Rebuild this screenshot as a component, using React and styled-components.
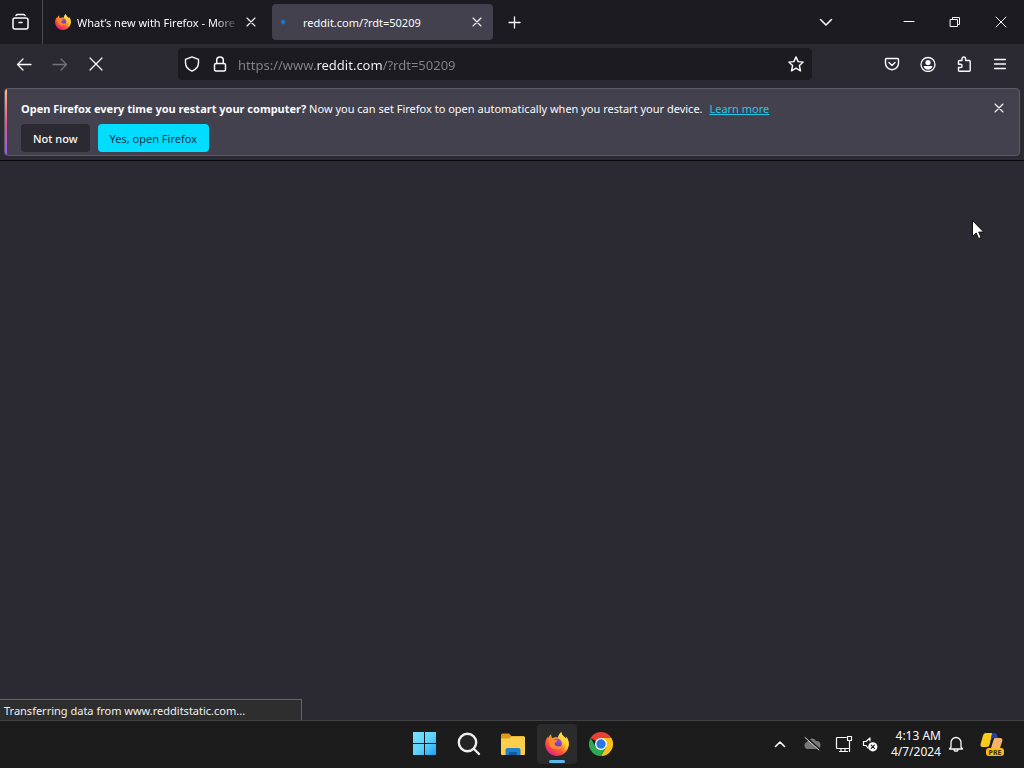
import React from 'react';
import styled, { createGlobalStyle } from 'styled-components';

const GlobalStyle = createGlobalStyle`
  * { box-sizing: border-box; }
  body {
    margin: 0;
    background: #2b2a33;
    color: #fbfbfe;
    font-family: "Noto Sans", "Open Sans", sans-serif;
    font-size: 11px;
    line-height: 16px;
  }
  button, input { font: inherit; color: inherit; }
`;

const Screen = styled.div`
  position: relative;
  display: flex;
  flex-direction: column;
  min-height: 100vh;
`;

const TabStrip = styled.header`
  display: flex;
  align-items: center;
  height: 44px;
  background: #1c1b22;
`;

const IconButton = styled.button`
  display: flex;
  align-items: center;
  justify-content: center;
  flex: none;
  width: ${(p) => p.$width || 36}px;
  height: ${(p) => p.$height || 32}px;
  padding: 0;
  border: 0;
  background: none;
  color: ${(p) => (p.$dim ? '#74737c' : '#fbfbfe')};
`;

const Overview = styled.div`
  display: flex;
  align-items: center;
  height: 100%;
  padding: 0 2px;
  margin-right: 3px;
  border-right: 1px solid #4b4a52;
`;

const Tabs = styled.div`
  display: flex;
  gap: 5px;
`;

const Tab = styled.div`
  display: flex;
  align-items: center;
  width: 221px;
  height: 36px;
  padding: 0 4px 0 9px;
  border-radius: 4px;
  background: ${(p) => (p.$active ? '#42414d' : 'transparent')};
`;

const TabTitle = styled.span`
  flex: 1;
  min-width: 0;
  padding: 1px 0 0 6px;
  line-height: 18px;
  white-space: nowrap;
  mask-image: ${(p) => (p.$fade ? 'linear-gradient(to left, transparent, #000 24px)' : 'none')};
`;

const Loading = styled.span`
  width: 16px;
  height: 16px;
  background: radial-gradient(circle at 2px 8px, #1680dd 0 1px, transparent 3px);
`;

const WindowControls = styled.div`
  display: flex;
  margin-left: auto;
`;

const ListTabs = styled.div`
  margin-right: 42px;
`;

const Toolbar = styled.nav`
  display: flex;
  align-items: center;
  height: 40px;
  padding: 0 6px;
`;

const Group = styled.div`
  display: flex;
  flex: none;
`;

const UrlBar = styled.div`
  display: flex;
  align-items: center;
  flex: 1;
  min-width: 0;
  height: 32px;
  margin: 0 62px 0 64px;
  border-radius: 4px;
  background: #1c1b22;
`;

const UrlInput = styled.input`
  flex: 1;
  min-width: 0;
  height: 32px;
  padding: 2px 0 0 4px;
  border: 0;
  outline: 0;
  font-size: 13px;
  color: #8f8e96;
  background: linear-gradient(90deg, #85848c 82px, #fbfbfe 82px 148px, #85848c 148px);
  background-clip: text;
  -webkit-background-clip: text;
  -webkit-text-fill-color: transparent;
`;

const NoticeArea = styled.div`
  padding: 4px;
  border-bottom: 1px solid #08080a;
`;

const Notice = styled.section`
  position: relative;
  display: flex;
  align-items: flex-start;
  height: 68px;
  padding: 11px 4px 3px 16px;
  border: 1px solid #5b5a66;
  border-radius: 4px;
  background: #42414d;
  overflow: hidden;

  &::before {
    content: "";
    position: absolute;
    inset: 0 auto 0 0;
    width: 2px;
    background: linear-gradient(#ffbd7f, #e45b8f 50%, #9059ff);
  }
`;

const NoticeBody = styled.div`
  flex: 1;
`;

const Message = styled.p`
  margin: 0 0 6px;
  line-height: 18px;
`;

const Link = styled.a`
  margin-left: 4px;
  color: #1fc9e8;
`;

const Actions = styled.div`
  display: flex;
  gap: 8px;
`;

const ActionButton = styled.button`
  height: 28px;
  padding: 1px 12px 0;
  border: 0;
  border-radius: 4px;
  white-space: nowrap;
  font-weight: ${(p) => (p.$primary ? 400 : 500)};
  background: ${(p) => (p.$primary ? '#00ddff' : '#2b2a33')};
  color: ${(p) => (p.$primary ? '#15324b' : '#fbfbfe')};
`;

const Page = styled.main`
  display: flex;
  flex: 1;
  align-items: flex-end;
`;

const Status = styled.div`
  width: 302px;
  height: 21px;
  padding: 3px 4px 0;
  border: 1px solid #66656c;
  border-width: 1px 1px 0 0;
  background: #2e2e2f;
  color: #f0f0f2;
`;

const Taskbar = styled.footer`
  display: grid;
  grid-template-columns: 1fr auto 1fr;
  height: 48px;
  padding: 3px 0 4px 2px;
  border-top: 1px solid #414045;
  background: #1c1c1c;
`;

const Apps = styled.div`
  display: flex;
  gap: 4px;
  grid-column: 2;
`;

const AppButton = styled.button`
  position: relative;
  display: flex;
  align-items: center;
  justify-content: center;
  width: 40px;
  height: 40px;
  padding: 0;
  border: 0;
  border-radius: 4px;
  background: ${(p) => (p.$active ? '#2b2b2c' : 'none')};

  &::after {
    content: "";
    display: ${(p) => (p.$active ? 'block' : 'none')};
    position: absolute;
    bottom: 1px;
    left: 12px;
    width: 16px;
    height: 3px;
    border-radius: 2px;
    background: #5cb8ec;
  }
`;

const Tray = styled.div`
  display: flex;
  align-items: center;
  justify-content: flex-end;
  padding-right: 11px;
`;

const Clock = styled.time`
  width: 61px;
  text-align: right;
  font-size: 12px;
`;

const Cursor = styled.svg`
  position: absolute;
  left: 972px;
  top: 220px;
`;

const Icon = ({ size = 16, sw = 1.3, children, ...rest }) => (
  <svg width={size} height={size} viewBox={`0 0 ${size} ${size}`} fill="none" stroke="currentColor"
    strokeWidth={sw} strokeLinecap="round" strokeLinejoin="round" aria-hidden="true" {...rest}>
    {children}
  </svg>
);

const Cross = ({ size = 16, inset = 4, sw = 1.1 }) => (
  <Icon size={size} sw={sw}>
    <path d={`M${inset} ${inset}L${size - inset} ${size - inset}M${size - inset} ${inset}L${inset} ${size - inset}`} />
  </Icon>
);

const FirefoxLogo = ({ size, id }) => (
  <svg width={size} height={size} viewBox="0 0 24 24" aria-hidden="true">
    <defs>
      <linearGradient id={`${id}a`} x1="20" y1="2" x2="5" y2="22" gradientUnits="userSpaceOnUse">
        <stop offset="0" stopColor="#fff04a" />
        <stop offset=".35" stopColor="#ffb12b" />
        <stop offset=".65" stopColor="#ff5a36" />
        <stop offset="1" stopColor="#e9207a" />
      </linearGradient>
      <linearGradient id={`${id}b`} x1="12" y1="6" x2="12" y2="16" gradientUnits="userSpaceOnUse">
        <stop offset="0" stopColor="#a84bd8" />
        <stop offset="1" stopColor="#5b3fc0" />
      </linearGradient>
    </defs>
    <path fill={`url(#${id}a)`} d="M16.400 0c-2 1.500-3 3.600-3.200 5.600-2.300-.7-4.300-.4-5.900.6C6.300 5 6 3.600 6.200 2.200 4.800 3.100 3.700 4.500 3.200 6 2.800 5.700 2.600 5.200 2.600 4.700.8 7.100.1 10 .2 12.700.7 19 5.600 23.900 12 23.900c6.700 0 11.800-5.200 11.800-11.800 0-3.100-1.100-5.900-3-7.700.3.800.4 1.500.4 2.300C19.300 4.700 16.600 3.400 16.400 0z" />
    <circle cx="11.800" cy="11.500" r="4.900" fill={`url(#${id}b)`} />
    <path fill="#ff8a2a" d="M3.200 8.200c1.600-1.500 3.500-1.800 5.200-1.200 1 .5 1.700 1.200 3.300 1.200.7 0 .9.400.6.900-.5.900-1.800 1-2.500 1.800-.6.700-.2 2.200 1 2.900 2.200 1.200 4 .1 5.900.600-1.200 2.400-3.900 3.500-6.700 2.800C5.700 16.500 4 12.300 3.200 8.200z" />
    <path fill="#ffd83d" d="M13.200 5.600c3.800 1.300 5.800 4.400 5.200 7.900 1.400-1 2-2.400 2-4 1.100 3.800.1 7.600-2.600 9.800 4-1.500 6-4.500 6-7.200 0-3.100-1.100-5.900-3-7.700.3.800.4 1.500.4 2.300C19.300 4.700 16.600 3.400 16.400 0c-2 1.500-3 3.600-3.200 5.600z" opacity=".75" />
  </svg>
);

const ChromeLogo = () => (
  <svg width="24" height="24" viewBox="0 0 24 24" aria-hidden="true">
    <path fill="#e94235" d="M12 12L1.600 6A12 12 0 0 1 22.400 6z" />
    <path fill="#fbc116" d="M12 6h10.400A12 12 0 0 1 12 24l5.200-9z" />
    <path fill="#2da94f" d="M1.600 6A12 12 0 0 0 12 24l5.200-9L12 12 6.800 15z" />
    <circle cx="12" cy="12" r="6" fill="#fff" />
    <circle cx="12" cy="12" r="4.700" fill="#2676e8" />
  </svg>
);

const WindowsLogo = () => (
  <svg width="24" height="24" viewBox="0 0 24 24" aria-hidden="true">
    <defs>
      <linearGradient id="win" x1="0" y1="0" x2="24" y2="24" gradientUnits="userSpaceOnUse">
        <stop offset="0" stopColor="#75e4fb" />
        <stop offset=".5" stopColor="#5fd2fb" />
        <stop offset="1" stopColor="#159bf2" />
      </linearGradient>
    </defs>
    <path fill="url(#win)" d="M0 0h11v11H0zM12 0h11v11H12zM0 12h11v11H0zM12 12h11v11H12z" />
  </svg>
);

const FolderLogo = () => (
  <svg width="26" height="24" viewBox="0 0 26 24" aria-hidden="true">
    <path fill="#dc9b1c" d="M1 3q0-1.500 1.500-1.500H9L11.500 4H24v6H1z" />
    <path fill="#fbcf4b" d="M1 6.500h8.500l2-2H24q1 0 1 1V22q0 1-1 1H2q-1 0-1-1z" />
    <path fill="#2380cc" d="M5.500 23v-5q0-2 2-2h11q2 0 2 2v5z" />
    <path fill="#135ba1" d="M9 20h8v3H9z" />
  </svg>
);

const CopilotLogo = () => (
  <svg width="26" height="26" viewBox="0 0 26 26" aria-hidden="true">
    <path fill="#f8cb19" d="M6.500 2h7L10.500 14q-.7 2-2.700 2H3.500Q1 16 1.600 13L4 4.500Q4.700 2 6.500 2z" />
    <path fill="#2140b5" d="M13 2h2.500q2 0 2.600 2l.9 3h-4.500q-1.500 0-2 1.600l-1 2z" />
    <path fill="#f5b36b" d="M16 7h5q3 0 2.300 3L21 17h-9l2.500-8q.5-2 1.500-2z" />
    <rect x="7" y="17" width="18" height="8" rx="3" fill="#fbbc16" />
    <text x="16" y="23.500" textAnchor="middle" fontSize="7" fontWeight="700" fill="#3a2c05" fontFamily="Noto Sans, sans-serif">PRE</text>
  </svg>
);

export default function App() {
  return (
    <Screen>
      <GlobalStyle />
      <TabStrip>
        <Overview>
          <IconButton aria-label="Firefox View" $width={38}>
            <Icon size={18} sw={1.5}>
              <path d="M4 2.500q.5-1 1.500-1h6q1 0 1.500 1" /><rect x="1" y="5" width="15" height="11" rx="2" /><path d="M7 9.500h3" />
            </Icon>
          </IconButton>
        </Overview>
        <Tabs>
          <Tab>
            <FirefoxLogo size={16} id="tabfx" />
            <TabTitle $fade>What’s new with Firefox - More</TabTitle>
            <IconButton aria-label="Close tab" $width={24} $height={24}><Cross /></IconButton>
          </Tab>
          <Tab $active>
            <Loading />
            <TabTitle>reddit.com/?rdt=50209</TabTitle>
            <IconButton aria-label="Close tab" $width={24} $height={24}><Cross /></IconButton>
          </Tab>
        </Tabs>
        <IconButton aria-label="New tab" $width={42}><Icon><path d="M8.500 3v11M3 8.500h11" /></Icon></IconButton>
        <WindowControls>
          <ListTabs>
            <IconButton aria-label="List all tabs"><Icon sw={1.6}><path d="M2.500 5.500L8 11l5.500-5.500" /></Icon></IconButton>
          </ListTabs>
          <IconButton aria-label="Minimize" $width={46}><Icon sw={1}><path d="M3 7.500h10" /></Icon></IconButton>
          <IconButton aria-label="Restore" $width={46}>
            <Icon sw={1} strokeLinejoin="miter"><path d="M3.500 5.500h7v7h-7zM5.500 5.500v-2h7v7h-2" /></Icon>
          </IconButton>
          <IconButton aria-label="Close" $width={46}><Cross inset={3} sw={1} /></IconButton>
        </WindowControls>
      </TabStrip>

      <Toolbar>
        <Group>
          <IconButton aria-label="Back"><Icon><path d="M15 8.500H1.500M7 3L1.500 8.500 7 14" /></Icon></IconButton>
          <IconButton aria-label="Forward" $dim><Icon><path d="M1 8.500h13.500M9 3l5.500 5.500L9 14" /></Icon></IconButton>
          <IconButton aria-label="Stop"><Cross inset={2} sw={1.3} /></IconButton>
        </Group>
        <UrlBar>
          <IconButton aria-label="Tracking protection" $width={28}>
            <Icon sw={1.4}><path d="M8 .9l6.500 2.500v3.400c0 4-2.500 6.800-6.500 8.400-4-1.600-6.500-4.400-6.500-8.400V3.400z" /></Icon>
          </IconButton>
          <IconButton aria-label="Site information" $width={28}>
            <Icon sw={1.5}><rect x="2.500" y="7.500" width="11" height="7.500" rx="1.500" /><path d="M4.700 7.500V4.300a3.300 3.300 0 0 1 6.600 0v3.200" /></Icon>
          </IconButton>
          <UrlInput aria-label="Address" defaultValue="https://www.reddit.com/?rdt=50209" />
          <IconButton aria-label="Bookmark" $width={32}>
            <Icon sw={1.4}><path d="M8 .9l2.100 4.700 5.100.5-3.800 3.400 1.100 5.300L8 12.200l-4.500 2.600 1.100-5.300L.8 6.100l5.100-.5z" /></Icon>
          </IconButton>
        </UrlBar>
        <Group>
          <IconButton aria-label="Pocket">
            <Icon sw={1.4}><path d="M2.500 2.500h11q1 0 1 1v3.700a6.500 6.500 0 0 1-13 0V3.500q0-1 1-1zM5 6.500l3 3 3-3" /></Icon>
          </IconButton>
          <IconButton aria-label="Account">
            <Icon sw={1.3}><circle cx="8" cy="8.500" r="7" /><circle cx="8" cy="6.500" r="2.600" fill="currentColor" stroke="none" /><path d="M3.600 10h8.800c0 2.200-2.200 3.700-4.400 3.700S3.600 12.200 3.600 10z" fill="currentColor" stroke="none" /></Icon>
          </IconButton>
          <IconButton aria-label="Extensions">
            <Icon sw={1.4}><path d="M6 4.500V2.800a1.800 1.800 0 0 1 3.600 0v1.700h3.600q1 0 1 1v8.700q0 1-1 1H3.500q-1 0-1-1V11.500h2a1.600 1.600 0 0 0 0-3.200h-2V5.500q0-1 1-1z" /></Icon>
          </IconButton>
          <IconButton aria-label="Menu"><Icon><path d="M2.500 3.500h11M2.500 8h11M2.500 12.500h11" /></Icon></IconButton>
        </Group>
      </Toolbar>

      <NoticeArea>
        <Notice>
          <NoticeBody>
            <Message>
              <b>Open Firefox every time you restart your computer?</b> Now you can set Firefox to open automatically when you restart your device. <Link href="#learn">Learn more</Link>
            </Message>
            <Actions>
              <ActionButton>Not now</ActionButton>
              <ActionButton $primary>Yes, open Firefox</ActionButton>
            </Actions>
          </NoticeBody>
          <IconButton aria-label="Dismiss" $width={32} $height={16}><Cross /></IconButton>
        </Notice>
      </NoticeArea>

      <Page>
        <Status role="status">Transferring data from www.redditstatic.com...</Status>
      </Page>

      <Taskbar>
        <Apps>
          <AppButton aria-label="Start"><WindowsLogo /></AppButton>
          <AppButton aria-label="Search">
            <Icon size={24} sw={2.4} color="#eeeeee"><circle cx="10.500" cy="10.500" r="8.700" fill="#242424" /><path d="M17 17l5 5" /></Icon>
          </AppButton>
          <AppButton aria-label="File Explorer"><FolderLogo /></AppButton>
          <AppButton aria-label="Firefox" $active><FirefoxLogo size={24} id="barfx" /></AppButton>
          <AppButton aria-label="Chrome"><ChromeLogo /></AppButton>
        </Apps>
        <Tray>
          <IconButton aria-label="Show hidden icons" $width={32}><Icon sw={1.6}><path d="M3.500 10.500L8 6l4.500 4.500" /></Icon></IconButton>
          <IconButton aria-label="OneDrive" $width={32}>
            <Icon size={18}><path d="M4.500 14a3.600 3.600 0 0 1-.5-7 5 5 0 0 1 9-1 4 4 0 0 1 1 8z" fill="#77777a" stroke="none" /><path d="M3 2l13 12" stroke="#1c1c1c" strokeWidth="2" /><path d="M2 2.500l14 12.500" stroke="#dddddd" strokeWidth="1" /></Icon>
          </IconButton>
          <IconButton aria-label="Network" $width={32}>
            <Icon size={18} sw={1.2}><path d="M11 2.500H2.500q-1 0-1 1v9q0 1 1 1h12M6 13.500v3M10 13.500v3M4.500 16.500h8M12.500 1.500h4v4h-4zM14.500 5.500v11" /></Icon>
          </IconButton>
          <IconButton aria-label="Volume muted" $width={20}>
            <Icon sw={1.2}><path d="M6 12L4 9.500H1.500v-4H4L8 2v3" /><circle cx="10.800" cy="10.800" r="4.600" fill="#ffffff" stroke="none" /><path d="M9.200 9.200l3.200 3.200M12.400 9.200l-3.200 3.200" stroke="#1c1c1c" /></Icon>
          </IconButton>
          <Clock dateTime="2024-04-07T04:13">4:13 AM<br />4/7/2024</Clock>
          <IconButton aria-label="Notifications" $width={30}>
            <Icon sw={1.3}><path d="M3 11V6.500a5 5 0 0 1 10 0V11l1.500 2h-13zM6 13.200a2 2 0 0 0 4 0" /></Icon>
          </IconButton>
          <IconButton aria-label="Copilot" $width={42}><CopilotLogo /></IconButton>
        </Tray>
      </Taskbar>

      <Cursor width="14" height="21" viewBox="0 0 14 21" aria-hidden="true">
        <path d="M.5.500v16l3.700-3.500 2.400 5.600 2.500-1.100-2.400-5.400h5z" fill="#ffffff" stroke="#111111" strokeWidth="1" />
      </Cursor>
    </Screen>
  );
}
